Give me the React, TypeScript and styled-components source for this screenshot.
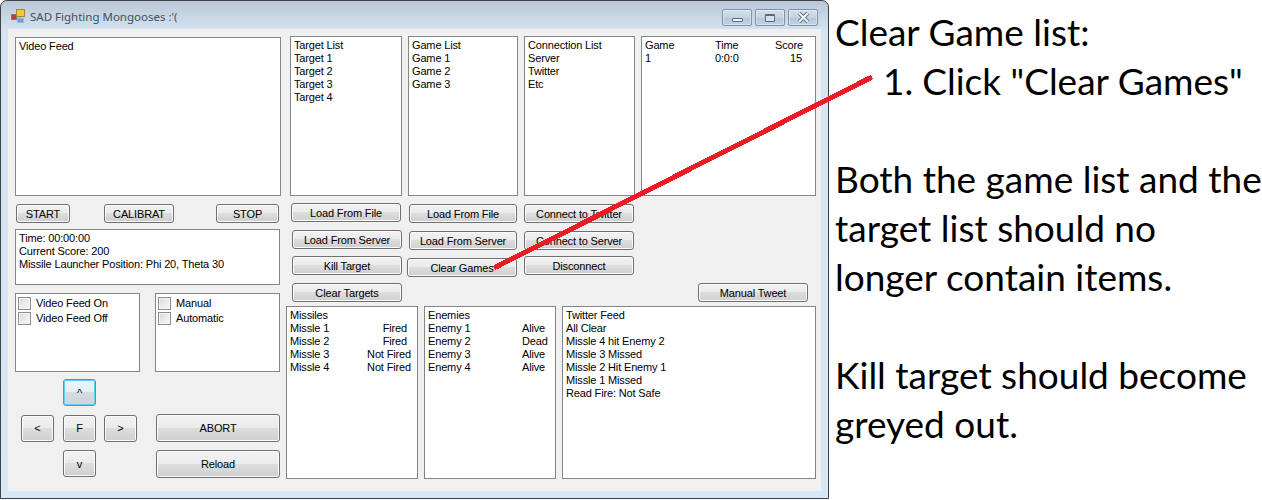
import React from 'react';
import styled, { createGlobalStyle, css } from 'styled-components';

const GlobalStyle = createGlobalStyle`
    html,body{
        margin:0;
        padding:0;
        background:#fff;
    }
    *{
        box-sizing:border-box;
    }
`

function App(){
    return(
        <Page>
            <GlobalStyle/>
            <Window>
                <TitleBar>
                    <AppIcon/>
                    <Title>SAD Fighting Mongooses :'(</Title>
                    <Caption>
                        <CaptionButton>
                            <MinGlyph/>
                        </CaptionButton>
                        <CaptionButton>
                            <MaxGlyph/>
                        </CaptionButton>
                        <CaptionButton>
                            <CloseGlyph/>
                        </CaptionButton>
                    </Caption>
                </TitleBar>
                <Client>
                    <LeftColumn>
                        <Box $h={159}>Video Feed</Box>
                        <TransportRow>
                            <Button $w={54}>START</Button>
                            <Button $w={70} $ml={34}>CALIBRAT</Button>
                            <Button $w={63} $ml={42}>STOP</Button>
                        </TransportRow>
                        <StatusBox $h={56}>
                            <div>Time: 00:00:00</div>
                            <div>Current Score: 200</div>
                            <div>Missile Launcher Position: Phi 20, Theta 30</div>
                        </StatusBox>
                        <CheckRow>
                            <CheckBox labels={['Video Feed On','Video Feed Off']}/>
                            <CheckBox labels={['Manual','Automatic']}/>
                        </CheckRow>
                        <ControlRow>
                            <Pad>
                                <PadButton $focused style={{gridColumn:2}}>^</PadButton>
                                <PadButton style={{gridColumn:1}}>&lt;</PadButton>
                                <PadButton>F</PadButton>
                                <PadButton>&gt;</PadButton>
                                <PadButton style={{gridColumn:2}}>v</PadButton>
                            </Pad>
                            <BigButtons>
                                <Button $w={124} $h={28}>ABORT</Button>
                                <Button $w={124} $h={28}>Reload</Button>
                            </BigButtons>
                        </ControlRow>
                    </LeftColumn>
                    <RightColumn>
                        <ListRow>
                            <Box $w={112} $h={160}>
                                <div>Target List</div>
                                <div>Target 1</div>
                                <div>Target 2</div>
                                <div>Target 3</div>
                                <div>Target 4</div>
                            </Box>
                            <Box $w={110} $h={160}>
                                <div>Game List</div>
                                <div>Game 1</div>
                                <div>Game 2</div>
                                <div>Game 3</div>
                            </Box>
                            <Box $w={111} $h={160}>
                                <div>Connection List</div>
                                <div>Server</div>
                                <div>Twitter</div>
                                <div>Etc</div>
                            </Box>
                            <Box $w={175} $h={160}>
                                <ScoreGrid>
                                    <span>Game</span><span>Time</span><ScoreValue>Score</ScoreValue>
                                    <span>1</span><span>0:0:0</span><ScoreValue>15</ScoreValue>
                                </ScoreGrid>
                            </Box>
                        </ListRow>
                        <ActionRow>
                            <ActionColumn $w={116}>
                                <Button $w={110} $h={19} $mt={0} $ml={1}>Load From File</Button>
                                <Button $w={110} $h={19} $mt={8} $ml={2}>Load From Server</Button>
                                <Button $w={110} $h={19} $mt={7} $ml={2}>Kill Target</Button>
                                <Button $w={110} $h={19} $mt={8} $ml={2}>Clear Targets</Button>
                            </ActionColumn>
                            <ActionColumn $w={118}>
                                <Button $w={108} $h={19} $mt={1} $ml={3}>Load From File</Button>
                                <Button $w={108} $h={19} $mt={8} $ml={3}>Load From Server</Button>
                                <Button $w={110} $h={19} $mt={8} $ml={1}>Clear Games</Button>
                            </ActionColumn>
                            <ActionColumn $w={110}>
                                <Button $w={110} $h={19} $mt={1}>Connect to Twitter</Button>
                                <Button $w={110} $h={19} $mt={8}>Connect to Server</Button>
                                <Button $w={110} $h={19} $mt={6}>Disconnect</Button>
                            </ActionColumn>
                            <TweetSlot>
                                <Button $w={110} $h={19}>Manual Tweet</Button>
                            </TweetSlot>
                        </ActionRow>
                        <FeedRow>
                            <Box $w={132} $h={173}>
                                <div>Missiles</div>
                                <MissileRow name="Missle 1" state="Fired"/>
                                <MissileRow name="Missle 2" state="Fired"/>
                                <MissileRow name="Missle 3" state="Not Fired"/>
                                <MissileRow name="Missle 4" state="Not Fired"/>
                            </Box>
                            <Box $w={132} $h={173}>
                                <div>Enemies</div>
                                <EnemyRow><span>Enemy 1</span><span>Alive</span></EnemyRow>
                                <EnemyRow><span>Enemy 2</span><span>Dead</span></EnemyRow>
                                <EnemyRow><span>Enemy 3</span><span>Alive</span></EnemyRow>
                                <EnemyRow><span>Enemy 4</span><span>Alive</span></EnemyRow>
                            </Box>
                            <Box $w={254} $h={173}>
                                <div>Twitter Feed</div>
                                <div>All Clear</div>
                                <div>Missle 4 hit Enemy 2</div>
                                <div>Missle 3 Missed</div>
                                <div>Missle 2 Hit Enemy 1</div>
                                <div>Missle 1 Missed</div>
                                <div>Read Fire: Not Safe</div>
                            </Box>
                        </FeedRow>
                    </RightColumn>
                </Client>
            </Window>
            <Notes>
                <NoteBlock>
                    Clear Game list:
                    <NoteStep><span>1.</span><span>Click "Clear Games"</span></NoteStep>
                </NoteBlock>
                <NoteBlock>
                    Both the game list and the<br/>
                    target list should no<br/>
                    longer contain items.
                </NoteBlock>
                <NoteBlock>
                    Kill target should become<br/>
                    greyed out.
                </NoteBlock>
            </Notes>
            <Pointer viewBox="0 0 1262 500">
                <line x1="870" y1="78" x2="496" y2="267" stroke="#ed1c24" strokeWidth="5" strokeLinecap="round" shapeRendering="crispEdges"/>
            </Pointer>
        </Page>
    );
}

function CheckBox({labels}:{labels:string[]}){
    return(
        <ChecksPanel>
            {labels.map((label,index)=>{
                return (<CheckItem key={index}>
                    <CheckSquare/>
                    <span>{label}</span>
                </CheckItem>);
            })}
        </ChecksPanel>
    );
}

function MissileRow({name,state}:{name:string,state:string}){
    return(
        <MissileLine>
            <span>{name}</span>
            <MissileState $short={state==='Fired'}>{state}</MissileState>
        </MissileLine>
    );
}

function AppIcon(){
    return(
        <IconSvg viewBox="0 0 14 14">
            <rect x="0.5" y="5.5" width="5" height="5" fill="#c8372a" stroke="#7d7d7d"/>
            <rect x="5.5" y="0.5" width="8" height="7" fill="#f4c63d" stroke="#a98a2c"/>
            <rect x="6.5" y="9.5" width="6" height="4" fill="#6d9fe0" stroke="#9fb4cf"/>
            <path d="M5 8h2M9 7v2" stroke="#888" fill="none"/>
        </IconSvg>
    );
}

function CloseGlyph(){
    return(
        <GlyphSvg viewBox="0 0 12 10">
            <path d="M2 1l8 8M10 1l-8 8" stroke="#5f6a76" strokeWidth="3.6" fill="none"/>
            <path d="M2 1l8 8M10 1l-8 8" stroke="#eef2f6" strokeWidth="2" fill="none"/>
        </GlyphSvg>
    );
}

const Page = styled.div`
    position:relative;
    display:flex;
    width:1262px;
    height:500px;
    overflow:hidden;
    background:#fff;
`

const Window = styled.div`
    flex:none;
    display:flex;
    flex-direction:column;
    width:829px;
    height:499px;
    padding:0 7px 7px 7px;
    border:1px solid #3d4247;
    border-radius:7px 7px 0 0;
    background:linear-gradient(180deg,#b8c7d7 0%,#d6e3f1 30px,#d9e6f4 100%);
`

const TitleBar = styled.div`
    flex:none;
    display:flex;
    align-items:center;
    height:28px;
    padding-left:3px;
`

const IconSvg = styled.svg`
    width:14px;
    height:14px;
    margin-top:2px;
`

const Title = styled.div`
    margin-left:5px;
    margin-top:2px;
    font-family:"Noto Sans","Open Sans",sans-serif;
    font-size:11.5px;
    color:#44505c;
    white-space:nowrap;
`

const Caption = styled.div`
    align-self:flex-start;
    margin-left:auto;
    margin-top:8px;
    margin-right:3px;
    display:flex;
    gap:3px;
`

const CaptionButton = styled.div`
    width:30px;
    height:17px;
    display:flex;
    align-items:center;
    justify-content:center;
    border:1px solid #7d93aa;
    border-radius:2px;
    background:linear-gradient(180deg,#d3dfeb 0%,#c4d3e2 50%,#b3c5d8 51%,#c2d3e4 100%);
    box-shadow:inset 0 0 0 1px rgba(255,255,255,0.35);
`

const MinGlyph = styled.div`
    width:11px;
    height:4px;
    margin-top:4px;
    border:1px solid #5f6a76;
    border-radius:1px;
    background:#eef2f6;
`

const MaxGlyph = styled.div`
    width:10px;
    height:8px;
    border:1px solid #5f6a76;
    border-top-width:2px;
    border-radius:1px;
    background:#d9e2ec;
`

const GlyphSvg = styled.svg`
    width:13px;
    height:11px;
`

const Client = styled.div`
    flex:1;
    display:flex;
    padding:8px 5px 0 7px;
    background:#f0f0f0;
    font-family:"Liberation Sans",Arial,sans-serif;
    font-size:11px;
    letter-spacing:-0.15px;
    line-height:13px;
    color:#000;
`

const LeftColumn = styled.div`
    flex:none;
    width:266px;
    display:flex;
    flex-direction:column;
`

const RightColumn = styled.div`
    flex:none;
    width:530px;
    margin-left:5px;
    margin-top:-1px;
    display:flex;
    flex-direction:column;
`

const Box = styled.div<{$w?:number,$h:number}>`
    flex:none;
    ${(p)=>p.$w?css`width:${p.$w}px;`:''}
    height:${(p)=>p.$h}px;
    padding:2px 3px;
    border:1px solid #82868c;
    background:#fff;
    white-space:nowrap;
`

const StatusBox = styled(Box)`
    width:265px;
    margin-top:6px;
`

const Button = styled.button<{$w:number,$h?:number,$mt?:number,$ml?:number}>`
    flex:none;
    display:block;
    width:${(p)=>p.$w}px;
    height:${(p)=>p.$h||19}px;
    margin-top:${(p)=>p.$mt||0}px;
    margin-left:${(p)=>p.$ml||0}px;
    padding:1px 0 0 0;
    border:1px solid #707070;
    border-radius:3px;
    background:linear-gradient(180deg,#f2f2f2 0%,#ebebeb 49%,#dddddd 50%,#cfcfcf 100%);
    box-shadow:inset 0 0 0 1px #fbfbfb;
    font-family:inherit;
    font-size:11px;
    letter-spacing:inherit;
    line-height:13px;
    color:#000;
`

const TransportRow = styled.div`
    display:flex;
    margin-top:8px;
    padding-left:1px;
`

const CheckRow = styled.div`
    display:flex;
    gap:15px;
    margin-top:8px;
`

const ChecksPanel = styled.div`
    width:125px;
    height:79px;
    padding:2px 2px;
    border:1px solid #82868c;
    background:#fff;
`

const CheckItem = styled.div`
    display:flex;
    align-items:center;
    gap:5px;
    height:15px;
`

const CheckSquare = styled.div`
    flex:none;
    width:13px;
    height:13px;
    border:1px solid #8e8f8f;
    background:linear-gradient(135deg,#d8d9dc 0%,#eceef0 60%,#f7f7f7 100%);
    box-shadow:inset 0 0 0 1px #f4f4f4;
`

const ControlRow = styled.div`
    display:flex;
    margin-top:7px;
    padding-left:6px;
`

const Pad = styled.div`
    flex:none;
    width:135px;
    display:grid;
    grid-template-columns:42px 41px 33px;
    grid-template-rows:27px 27px 27px;
    row-gap:8.5px;
`

const PadButton = styled.button<{$focused?:boolean}>`
    width:33px;
    height:27px;
    padding:0;
    border:1px solid ${(p)=>p.$focused?'#3c9bd1':'#707070'};
    border-radius:3px;
    background:${(p)=>p.$focused
        ?'linear-gradient(180deg,#eaf6fd 0%,#e4eff5 49%,#d4dcdf 50%,#cfd5d8 100%)'
        :'linear-gradient(180deg,#f2f2f2 0%,#ebebeb 49%,#dddddd 50%,#cfcfcf 100%)'};
    box-shadow:inset 0 0 0 1px ${(p)=>p.$focused?'#62d0f5':'#fbfbfb'};
    font-family:inherit;
    font-size:11px;
    color:#000;
`

const BigButtons = styled.div`
    display:flex;
    flex-direction:column;
    gap:8px;
    margin-top:35px;
`

const ListRow = styled.div`
    display:flex;
    padding-left:4px;
    gap:6px;
`

const ScoreGrid = styled.div`
    display:grid;
    grid-template-columns:70px 60px 27px;
`

const ScoreValue = styled.span`
    text-align:right;
`

const ActionRow = styled.div`
    display:flex;
    height:103px;
    margin-top:7px;
    padding-left:4px;
`

const ActionColumn = styled.div<{$w:number}>`
    flex:none;
    width:${(p)=>p.$w}px;
`

const TweetSlot = styled.div`
    margin-left:auto;
    margin-right:8px;
    margin-top:80px;
`

const FeedRow = styled.div`
    display:flex;
    gap:6px;
`

const MissileLine = styled.div`
    display:flex;
    justify-content:space-between;
    padding-right:3px;
`

const MissileState = styled.span<{$short:boolean}>`
    padding-right:${(p)=>p.$short?4:0}px;
`

const EnemyRow = styled.div`
    display:grid;
    grid-template-columns:94px auto;
`

const Notes = styled.div`
    flex:none;
    padding:7px 0 0 6px;
    font-family:Lato,"Open Sans",sans-serif;
    font-size:37px;
    line-height:49px;
    color:#000;
    white-space:nowrap;
`

const NoteBlock = styled.div`
    margin-bottom:49px;
`

const NoteStep = styled.div`
    display:flex;
    gap:9px;
    padding-left:48px;
`

const Pointer = styled.svg`
    position:absolute;
    left:0;
    top:0;
    width:1262px;
    height:500px;
    pointer-events:none;
`

export default App;
